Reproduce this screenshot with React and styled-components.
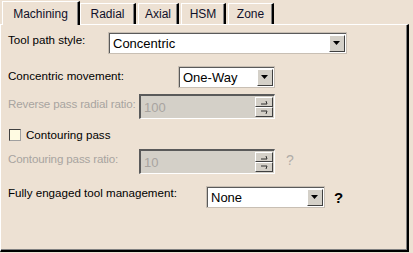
import styled, { createGlobalStyle } from "styled-components";

const Global = createGlobalStyle`
  body {
    margin: 0;
    background: #ede1d3;
    font-family: "Liberation Sans", Arial, sans-serif;
    font-size: 12px;
  }
`;

const Window = styled.div`
  width: 413px;
  height: 253px;
  background: #ede1d3;
  display: flex;
  flex-direction: column;
  overflow: hidden;
`;

const TabBar = styled.div`
  display: flex;
  align-items: flex-end;
  height: 24px;
  padding-left: 2px;
  position: relative;
  z-index: 1;
`;

const Tab = styled.div`
  box-sizing: border-box;
  height: ${(p) => (p.active ? "24px" : "21px")};
  margin-bottom: ${(p) => (p.active ? "-1px" : "0")};
  width: ${(p) => p.w}px;
  margin-right: ${(p) => (p.active ? "0" : "2px")};
  padding-top: ${(p) => (p.active ? "5px" : "3px")};
  text-align: center;
  font-size: 12px;
  color: #10102a;
  background: #ede1d3;
  border-top: 1px solid #ffffff;
  border-left: 1px solid #ffffff;
  border-right: 2px solid #000;
  box-shadow: inset -1px 0 0 #808080;
`;

const Panel = styled.div`
  box-sizing: border-box;
  width: 409px;
  height: 228px;
  border-top: 1px solid #ffffff;
  border-left: 1px solid #ffffff;
  border-right: 2px solid #000;
  border-bottom: 2px solid #000;
  box-shadow: inset -1px -1px 0 #808080;
  padding: 7px 0 0 7px;
  display: flex;
  flex-direction: column;
`;

const Row = styled.div`
  display: flex;
  align-items: flex-start;
  margin-top: ${(p) => p.mt || 0}px;
`;

const Label = styled.div`
  width: ${(p) => p.w}px;
  flex-shrink: 0;
  padding-top: ${(p) => p.pt || 0}px;
  font-size: 11.6px;
  letter-spacing: ${(p) => (p.disabled ? "-0.15px" : "0")};
  color: ${(p) => (p.disabled ? "#a8a4a0" : "#000")};
  white-space: nowrap;
`;

const Combo = styled.div`
  box-sizing: border-box;
  width: ${(p) => p.w}px;
  height: 22px;
  display: flex;
  background: #fff;
  border-top: 2px solid #5a5a5a;
  border-left: 2px solid #5a5a5a;
  border-right: 1px solid #fff;
  border-bottom: 1px solid #fff;
  outline: 1px solid #c8bfb4;
  outline-offset: -1px;
`;

const ComboText = styled.div`
  flex: 1;
  padding: 2px 0 0 3px;
  font-size: 13px;
  color: #000;
`;

const ArrowBtn = styled.div`
  box-sizing: border-box;
  width: 16px;
  height: 17px;
  margin: 1px 1px 0 0;
  background: #d4d0c8;
  border-top: 1px solid #fff;
  border-left: 1px solid #fff;
  border-right: 1px solid #404040;
  border-bottom: 1px solid #404040;
  display: flex;
  align-items: center;
  justify-content: center;
`;

const SpinBox = styled.div`
  box-sizing: border-box;
  width: 136px;
  height: 25px;
  display: flex;
  background: #d4d0c8;
  border-top: 2px solid #5a5a5a;
  border-left: 2px solid #5a5a5a;
  border-right: 1px solid #fff;
  border-bottom: 1px solid #fff;
`;

const SpinText = styled.div`
  flex: 1;
  padding: 4px 0 0 3px;
  font-size: 13px;
  color: #a8a4a0;
`;

const SpinBtns = styled.div`
  display: flex;
  flex-direction: column;
  margin: 1px 1px 0 0;
`;

const SpinBtn = styled.div`
  box-sizing: border-box;
  width: 18px;
  height: 10px;
  background: #d4d0c8;
  border-top: 1px solid #fff;
  border-left: 1px solid #fff;
  border-right: 1px solid #404040;
  border-bottom: 1px solid #404040;
  display: flex;
  align-items: center;
  justify-content: center;
`;

const Help = styled.div`
  margin-left: ${(p) => p.ml}px;
  padding-top: 3px;
  font-size: ${(p) => (p.bold ? "15px" : "14px")};
  font-weight: ${(p) => (p.bold ? "bold" : "normal")};
  color: ${(p) => (p.bold ? "#000" : "#b0aca8")};
`;

const Check = styled.div`
  box-sizing: border-box;
  width: 12px;
  height: 12px;
  margin: 1px 5px 0 1px;
  background: #fffbe2;
  border-top: 1px solid #404040;
  border-left: 1px solid #404040;
  border-right: 1px solid #a0a0a0;
  border-bottom: 1px solid #a0a0a0;
`;

const Down = () => (
  <svg width="8" height="5" viewBox="0 0 8 5">
    <path d="M0 0H7L3.5 4Z" fill="#000" />
  </svg>
);

const Tick = ({ up }) => (
  <svg width="8" height="5" viewBox="0 0 8 5">
    <path d={up ? "M1 4H7L6 1" : "M1 1H7L6 4"} stroke="#303030" strokeWidth="1" fill="none" />
  </svg>
);

const Spin = ({ value }) => (
  <SpinBox>
    <SpinText>{value}</SpinText>
    <SpinBtns>
      <SpinBtn><Tick up /></SpinBtn>
      <SpinBtn><Tick /></SpinBtn>
    </SpinBtns>
  </SpinBox>
);

const Select = ({ w, value }) => (
  <Combo w={w}>
    <ComboText>{value}</ComboText>
    <ArrowBtn><Down /></ArrowBtn>
  </Combo>
);

const App = () => {
  return (
    <Window>
      <Global />
      <TabBar>
        <Tab active w={78}>Machining</Tab>
        <Tab w={56}>Radial</Tab>
        <Tab w={41}>Axial</Tab>
        <Tab w={45}>HSM</Tab>
        <Tab w={46}>Zone</Tab>
      </TabBar>
      <Panel>
        <Row>
          <Label w={100} pt={1}>Tool path style:</Label>
          <Select w={239} value="Concentric" />
        </Row>
        <Row mt={12}>
          <Label w={170} pt={3}>Concentric movement:</Label>
          <Select w={97} value="One-Way" />
        </Row>
        <Row mt={6}>
          <Label w={131} pt={3} disabled>Reverse pass radial ratio:</Label>
          <Spin value="100" />
        </Row>
        <Row mt={9}>
          <Check />
          <Label w={200}>Contouring pass</Label>
        </Row>
        <Row mt={8}>
          <Label w={131} pt={3} disabled>Contouring pass ratio:</Label>
          <Spin value="10" />
          <Help ml={11}>?</Help>
        </Row>
        <Row mt={12}>
          <Label w={198} pt={0}>Fully engaged tool management:</Label>
          <Select w={119} value="None" />
          <Help ml={9} bold>?</Help>
        </Row>
      </Panel>
    </Window>
  );
};

export default App;
